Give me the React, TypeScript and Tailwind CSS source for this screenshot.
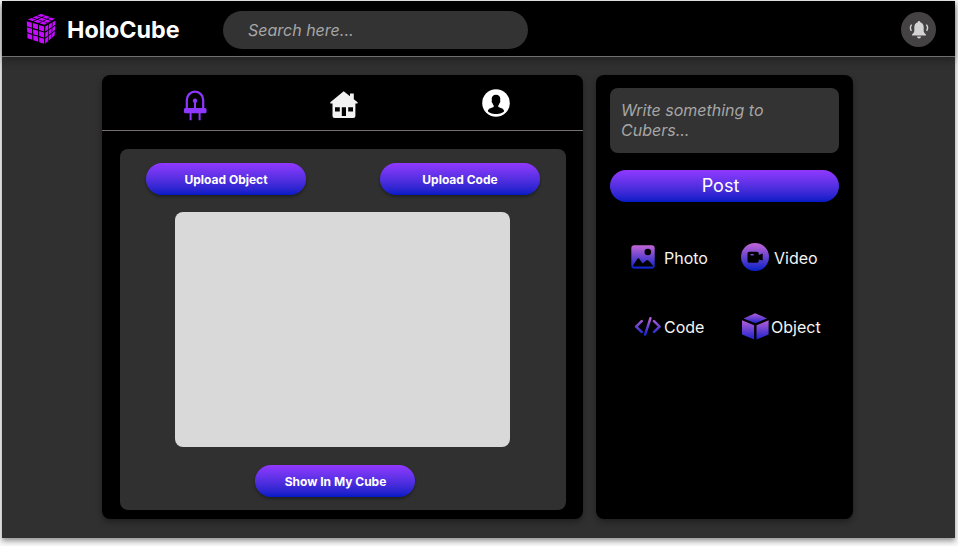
import React from "react";

type Point = [number, number];

// Splits a cube face, given by its corners, into nine separate stickers.
function faceTiles([a, b, c, d]: [Point, Point, Point, Point]): string[] {
  const at = (u: number, v: number) => {
    const mix = (i: 0 | 1) =>
      a[i] * (1 - u) * (1 - v) + b[i] * u * (1 - v) + c[i] * u * v + d[i] * (1 - u) * v;
    return `${mix(0).toFixed(2)},${mix(1).toFixed(2)}`;
  };
  const tiles: string[] = [];
  for (let row = 0; row < 3; row++) {
    for (let col = 0; col < 3; col++) {
      const u0 = (col + 0.09) / 3;
      const u1 = (col + 0.91) / 3;
      const v0 = (row + 0.09) / 3;
      const v1 = (row + 0.91) / 3;
      tiles.push([at(u0, v0), at(u1, v0), at(u1, v1), at(u0, v1)].join(" "));
    }
  }
  return tiles;
}

const logoTiles = [
  ...faceTiles([[0.8, 5.6], [15, -0.5], [29.7, 4.8], [18.4, 11.2]]),
  ...faceTiles([[0.2, 6.6], [18.6, 12], [18.6, 30.6], [1, 24.6]]),
  ...faceTiles([[18.9, 12.2], [29.9, 5.8], [29, 21.4], [18.9, 30.6]]),
];

function Logo() {
  return (
    <svg className="mt-px h-[31px] w-[31px] shrink-0" viewBox="0 0 31 31" fill="#c40aff">
      {logoTiles.map((points) => (
        <polygon key={points} points={points} />
      ))}
    </svg>
  );
}

function BellIcon() {
  return (
    <svg className="h-[20px] w-[20px]" viewBox="0 0 20 20" fill="#d4d4d4">
      <path d="M10 1a1.3 1.3 0 0 1 1.3 1.2C13.5 2.8 14.7 4.7 14.7 7v3.7c0 1.4.7 2.4 2.2 3.5v1.3H3.1v-1.3c1.5-1.1 2.2-2.1 2.2-3.5V7c0-2.3 1.2-4.2 3.4-4.8A1.3 1.3 0 0 1 10 1Z" />
      <path d="M8 16.5h4a2 2 0 0 1-4 0Z" />
      <path d="M2.6 4.6c-1.5 2-1.5 4.3-.2 6.3M17.4 4.6c1.5 2 1.5 4.3.2 6.3" fill="none" stroke="#d4d4d4" strokeWidth="1.4" />
    </svg>
  );
}

function LedIcon() {
  return (
    <svg className="h-[31px] w-[24px]" viewBox="0 0 24 31" fill="none" stroke="#8e37ff">
      <path d="M3.8 19V9.9a8.2 8.2 0 0 1 16.4 0V19" strokeWidth="2.2" />
      <path d="M12 11v8M7.6 22v8.2M16.6 22v8.2" strokeWidth="2" />
      <circle cx="12" cy="10.8" r="2.2" fill="#8e37ff" stroke="none" />
      <rect x=".9" y="17.9" width="22.6" height="5.4" rx="1.5" fill="#8e37ff" stroke="none" />
    </svg>
  );
}

function HomeIcon() {
  return (
    <svg className="h-[28px] w-[28px]" viewBox="0 0 28 28" fill="#f2f2f2">
      <path
        fillRule="evenodd"
        d="M13.7.3 20 5.2V2.6h3.8v5.7L27.6 11.2v1.4h-2.2v12.5a2 2 0 0 1-2 2H4.5a2 2 0 0 1-2-2V12.6H.3v-1.4ZM5 16.2v4.4h4.8v-4.4Zm6.8 0v8.9h4.2v-8.9Zm6.4 0v4.4H23v-4.4Z"
      />
    </svg>
  );
}

function ProfileIcon() {
  return (
    <svg className="h-[28px] w-[28px]" viewBox="0 0 28 28">
      <circle cx="14" cy="14" r="13.8" fill="#fff" />
      <path
        fill="#000"
        d="M14 5.8c2.8 0 4.3 1.6 4.3 4.3 0 .7-.1 1.2-.2 1.6.5.4.2 1.9-.5 2.4-.2 1-.6 1.8-1.3 2.4v1.4c1.5.9 5.8 1.2 5.8 4.2 0 1.5-4.3 3-8.1 3s-8.1-1.5-8.1-3c0-3 4.3-3.3 5.8-4.2v-1.4c-.7-.6-1.1-1.4-1.3-2.4-.7-.5-1-2-.5-2.4a6 6 0 0 1-.2-1.6c0-2.7 1.5-4.3 4.3-4.3Z"
      />
    </svg>
  );
}

function Gradient({ id, height }: { id: string; height: number }) {
  return (
    <defs>
      <linearGradient id={id} gradientUnits="userSpaceOnUse" x1="0" y1="0" x2="0" y2={height}>
        <stop stopColor="#c566d6" />
        <stop offset="1" stopColor="#0820c8" />
      </linearGradient>
    </defs>
  );
}

function PhotoIcon() {
  return (
    <svg className="h-[24px] w-[24px]" viewBox="0 0 24 24">
      <Gradient id="photo" height={24} />
      <rect x=".3" y=".3" width="23.4" height="23.4" rx="3" fill="url(#photo)" />
      <circle cx="16.8" cy="7" r="3.3" />
      <path d="M2 20.8 6.2 14c.6-.9 1.6-.9 2.2 0l3.2 4.5 3.5-2.9c.8-.6 1.9-.6 2.6.2l4.3 5v.6H2Z" />
    </svg>
  );
}

function VideoIcon() {
  return (
    <svg className="h-[28px] w-[28px]" viewBox="0 0 28 28">
      <Gradient id="video" height={28} />
      <circle cx="14" cy="14" r="14" fill="url(#video)" />
      <path
        fillRule="evenodd"
        d="M8.2 8.8h7.6a2 2 0 0 1 2 2v1.1l3.9-1.3v7l-3.9-1.1v1.3a2 2 0 0 1-2 2H8.2a1.7 1.7 0 0 1-1.7-1.7v-7.6a1.7 1.7 0 0 1 1.7-1.7Zm1.8 2.3a.6.6 0 0 0 0 1.4h2.2a.6.6 0 0 0 0-1.4Z"
      />
    </svg>
  );
}

function CodeIcon() {
  return (
    <svg className="h-[19px] w-[27px]" viewBox="0 0 27 19">
      <Gradient id="code" height={19} />
      <path
        d="M7.7 4.2 2.1 9.6 7.7 15M20 4.2l5.6 5.4-5.6 5.4M16.4 1.3 11.1 17.7"
        fill="none"
        stroke="url(#code)"
        strokeWidth="2.5"
        strokeLinecap="round"
        strokeLinejoin="round"
      />
    </svg>
  );
}

function ObjectIcon() {
  return (
    <svg className="h-[27px] w-[28px]" viewBox="0 0 28 27">
      <defs>
        <linearGradient id="cube" x1="0" y1="0" x2="0" y2="1">
          <stop stopColor="#b45fd8" />
          <stop offset="1" stopColor="#1c22cc" />
        </linearGradient>
      </defs>
      <path d="M14.1.3 26 5.4 14.3 10.2 2.5 5.4Z" fill="url(#cube)" />
      <path d="M1 7.2 13.1 12.3v14.3L1 21.4Z" fill="url(#cube)" />
      <path d="M15.5 12.3l12.1-5.1v14.2l-12.1 5.2Z" fill="url(#cube)" />
    </svg>
  );
}

function PillButton({ children }: { children: React.ReactNode }) {
  return (
    <button className="h-8 w-[160px] rounded-full bg-linear-to-b from-[#9138ff] to-[#021bc5] pt-px pl-px text-[12px] leading-none font-bold text-white shadow-[0_2px_3px_rgba(0,0,0,0.35)]">
      {children}
    </button>
  );
}

function Attachment({ icon, label, className }: { icon: React.ReactNode; label: string; className: string }) {
  return (
    <div className={`flex h-7 items-center text-[16px] leading-none text-[#f4f4f4] ${className}`}>
      {icon}
      <span className="pt-px">{label}</span>
    </div>
  );
}

export default function App() {
  return (
    <div className="h-[546px] w-[958px] overflow-hidden bg-[#f7f7f7] pt-px pl-[2px] font-['Inter','Liberation_Sans',sans-serif]">
      <div className="flex h-[537px] w-[953px] flex-col bg-[#303030] shadow-[0_3px_5px_rgba(0,0,0,0.4)]">
        <header className="flex h-[56px] shrink-0 items-center border-b border-[#707070] bg-black pt-px pr-[19px] pl-6 shadow-[0_3px_8px_rgba(0,0,0,0.35)]">
          <Logo />
          <h1 className="mt-[2px] ml-[10px] w-[156px] text-[23.3px] leading-none font-bold text-white">HoloCube</h1>
          <div className="mt-px flex h-[38px] w-[305px] items-center rounded-full bg-[#333333] pl-[25px] text-[16px] text-[#a6a6a6] italic">
            Search here...
          </div>
          <button className="mt-px ml-auto flex h-[35px] w-[35px] items-center justify-center rounded-full bg-[#444243]">
            <BellIcon />
          </button>
        </header>

        <main className="flex gap-[13px] pt-[18.4px] pl-[100px]">
          <section className="h-[444px] w-[481px] rounded-lg bg-black shadow-[0_3px_6px_rgba(0,0,0,0.35)]">
            <nav className="flex h-[56px] items-start border-b border-[#77706f] pl-[81px]">
              <div className="w-[147px] pt-[15px]"><LedIcon /></div>
              <div className="w-[152px] pt-4"><HomeIcon /></div>
              <div className="pt-[14px]"><ProfileIcon /></div>
            </nav>
            <div className="mt-[18px] ml-[17.5px] flex h-[361px] w-[446px] flex-col items-center rounded-lg bg-[#303030] pt-[14px]">
              <div className="flex w-[394px] justify-between">
                <PillButton>Upload Object</PillButton>
                <PillButton>Upload Code</PillButton>
              </div>
              <div className="mt-[17px] mb-[18px] h-[235px] w-[335px] rounded-lg bg-[#d9d9d9]" />
              <div className="mr-[15px]"><PillButton>Show In My Cube</PillButton></div>
            </div>
          </section>

          <aside className="h-[444px] w-[257px] rounded-lg bg-black px-[14px] pt-[12.4px] shadow-[0_3px_6px_rgba(0,0,0,0.35)]">
            <div className="h-[65px] rounded-lg bg-[#333333] pt-[13.5px] pl-[11px] text-[16px] leading-[19.5px] text-[#a6a6a6] italic">
              Write something to
              <br />
              Cubers...
            </div>
            <button className="mt-[17.5px] h-8 w-full rounded-full bg-linear-to-b from-[#9138ff] to-[#021bc5] pr-2 text-[18px] leading-none text-white">
              Post
            </button>
            <div className="mt-[41px] grid grid-cols-[110px_1fr] gap-y-[41px] pl-[21px]">
              <Attachment icon={<PhotoIcon />} label="Photo" className="gap-[9px]" />
              <Attachment icon={<VideoIcon />} label="Video" className="gap-[5px]" />
              <Attachment icon={<CodeIcon />} label="Code" className="gap-[3px] pl-[3px]" />
              <Attachment icon={<ObjectIcon />} label="Object" className="gap-[2px]" />
            </div>
          </aside>
        </main>
      </div>
    </div>
  );
}
